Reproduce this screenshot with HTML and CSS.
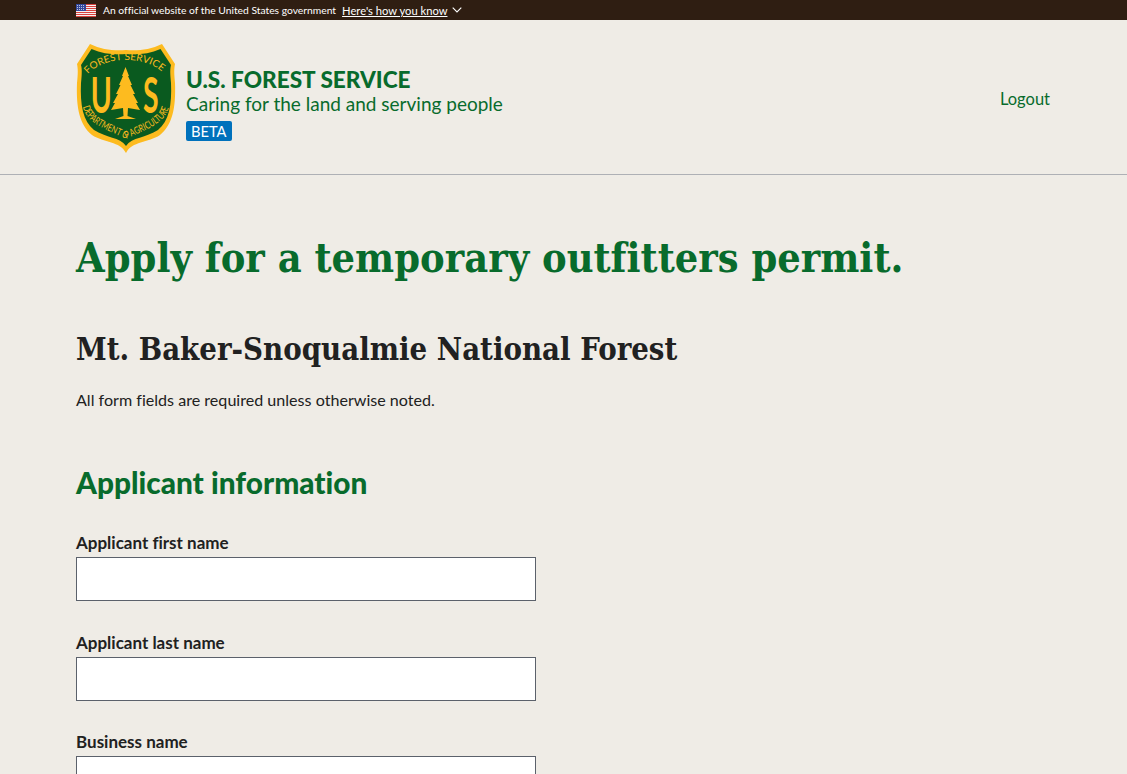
FILE: index.html
```html
<!DOCTYPE html>
<html lang="en">
<head>
<meta charset="utf-8">
<title>Apply for a temporary outfitters permit</title>
<link rel="stylesheet" href="styles.css">
</head>
<body>
<div class="gov-banner">
  <svg class="flag" viewBox="0 0 20 13" width="20" height="13" aria-hidden="true">
    <rect width="20" height="13" fill="#f4f1f1"/>
    <path d="M0 .5h20M0 2.5h20M0 4.5h20M0 6.5h20M0 8.5h20M0 10.5h20M0 12.5h20" stroke="#d8413c" stroke-width="1"/>
    <rect width="10" height="7" fill="#33489a"/>
    <path d="M1 1.5h8M1 3.5h8M1 5.5h8" stroke="#dfe3f2" stroke-width=".8" stroke-dasharray="1 1"/>
  </svg>
  <span class="gov-text">An official website of the United States government</span>
  <a class="gov-link" href="#">Here's how you know</a>
  <svg class="chev" viewBox="0 0 10 6" width="10" height="6" aria-hidden="true"><path d="M.7.7 5 5 9.3.7" fill="none" stroke="#fff" stroke-width="1.1"/></svg>
</div>
<header class="site-header">
  <div class="brand">
    <svg class="logo" viewBox="0 0 100 110" width="100" height="110" role="img" aria-label="U.S. Forest Service shield">
      <defs>
        <path id="arcTop" d="M12 31 C20 22 34 17 50 17 C66 17 80 22 88 31"/>
        <path id="arcBot" d="M7 64 C11 82 35 88 50 96 C65 88 89 82 93 64"/>
      </defs>
      <path d="M14 1 C26 7 39 8 50 7 C61 8 74 7 86 1 L99 21 C98 26 98 30 99 40 C100 66 96 82 84 92 C72 100 56 98 50 110 C44 98 28 100 16 92 C4 82 0 66 1 40 C2 30 2 26 1 21 Z" fill="#fdbb1f"/>
      <path d="M15.500 6 C27 11 39 12 50 11 C61 12 73 11 84.500 6 L95 22 C94 26 94 30 95 40 C96 62 93 78 82 87 C70 95 56 94 50 103 C44 94 30 95 18 87 C7 78 4 62 5 40 C6 30 6 26 5 22 Z" fill="#0a5a1f"/>
      <text class="logo-arc" font-size="9.800"><textPath href="#arcTop" textLength="80" lengthAdjust="spacingAndGlyphs">FOREST SERVICE</textPath></text>
      <text class="logo-arc" font-size="10"><textPath href="#arcBot" textLength="110" lengthAdjust="spacingAndGlyphs">DEPARTMENT OF AGRICULTURE</textPath></text>
      <text class="logo-us" transform="scale(.58 1)" x="43.500" y="70" font-size="49" text-anchor="middle">U</text>
      <text class="logo-us" transform="scale(.58 1)" x="129" y="70" font-size="49" text-anchor="middle">S</text>
      <path d="M49.500 24 L53 33 L52 33 L56 42 L54.500 42 L59 51 L57 51 L62 60 L60 60 L64 67 L52 65 L51.500 73 L60 76 L39 76 L47.500 73 L47 65 L35 67 L39 60 L37 60 L42 51 L40 51 L44.500 42 L43 42 L47 33 L46 33 Z" fill="#fdbb1f"/>
    </svg>
    <div class="brand-text">
      <div class="brand-name">U.S. FOREST SERVICE</div>
      <div class="brand-tag">Caring for the land and serving people</div>
      <span class="beta">BETA</span>
    </div>
  </div>
  <a class="logout" href="#">Logout</a>
</header>
<main class="content">
  <h1>Apply for a temporary outfitters permit.</h1>
  <h2>Mt. Baker-Snoqualmie National Forest</h2>
  <p class="note">All form fields are required unless otherwise noted.</p>
  <h3>Applicant information</h3>
  <div class="field"><label for="f1">Applicant first name</label><input id="f1" type="text"></div>
  <div class="field"><label for="f2">Applicant last name</label><input id="f2" type="text"></div>
  <div class="field"><label for="f3">Business name</label><input id="f3" type="text"></div>
</main>
</body>
</html>
```
FILE: styles.css
```css
* { box-sizing: border-box; }
html, body { height: 100%; }
body {
  margin: 0;
  background: #efece6;
  color: #212121;
  font-family: "Lato", "Open Sans", sans-serif;
  font-variant-ligatures: none;
  overflow: hidden;
  height: 774px;
}
.gov-banner {
  height: 20px;
  background: #2f1e12;
  color: #fff;
  display: flex;
  align-items: center;
  padding-left: 76px;
  font-size: 10.300px;
}
.flag { margin-right: 7px; }
.gov-text { margin-right: 6px; }
.gov-link { color: #fff; text-decoration: underline; margin-right: 5px; font-size: 11.200px; }
.site-header {
  height: 155px;
  border-bottom: 1px solid #aeb0b5;
  display: flex;
  justify-content: space-between;
  align-items: flex-start;
  padding: 23px 77px 0 76px;
}
.brand { display: flex; align-items: flex-start; gap: 10px; }
.brand-text { padding-top: 24px; display: flex; flex-direction: column; align-items: flex-start; color: #086b2c; }
.brand-name { font-size: 22.600px; line-height: 26px; font-weight: 900; }
.brand-tag { font-size: 19px; line-height: 23px; margin-top: -1px; }
.beta {
  background: #0071bc;
  color: #fff;
  font-size: 14.700px;
  line-height: 20px;
  padding: 0 5px;
  border-radius: 2px;
  margin-top: 6px;
}
.logout { color: #086b2c; text-decoration: none; font-size: 16.500px; margin-top: 46px; }
.logo-arc { fill: #fdbb1f; font-family: "Lato", sans-serif; }
.logo-us { fill: #fdbb1f; font-family: "Lato", sans-serif; font-weight: 700; }
.content { padding: 53px 0 0 76px; }
h1 {
  margin: 0;
  font-family: "DejaVu Serif Condensed", "DejaVu Serif", serif;
  font-weight: 700;
  color: #086b2c;
  font-size: 41.100px;
  line-height: 60px;
}
h2 {
  margin: 39px 0 0;
  font-family: "DejaVu Serif Condensed", "DejaVu Serif", serif;
  font-weight: 700;
  font-size: 30.800px;
  line-height: 44px;
}
.note { margin: 17px 0 0; font-size: 16.100px; line-height: 24px; }
h3 {
  margin: 51px 0 0;
  color: #086b2c;
  font-size: 29.800px;
  line-height: 40px;
  font-weight: 900;
}
.field { margin-top: 30px; }
.field + .field { margin-top: 31.500px; }
label { display: block; font-weight: 700; font-size: 17px; line-height: 20px; margin-bottom: 4px; }
input { display: block; width: 460px; height: 44px; border: 1px solid #5b616b; background: #fff; border-radius: 0; }
```
